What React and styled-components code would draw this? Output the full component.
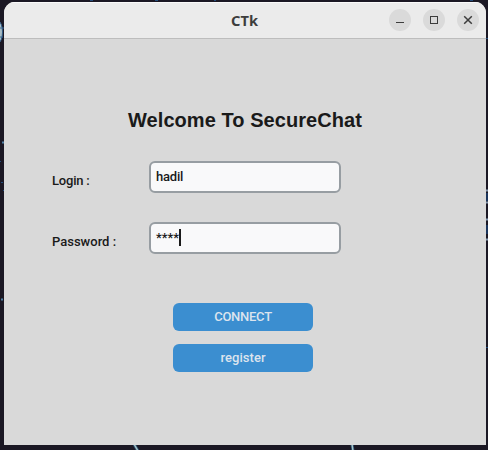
import React from "react";
import styled, { createGlobalStyle } from "styled-components";

const GlobalStyle = createGlobalStyle`
  * { box-sizing: border-box; }
  body { margin: 0; background: #1b1824; overflow: hidden; }
`;

const Desktop = styled.div`
  position: relative;
  width: 488px;
  height: 450px;
  padding: 2px 2px 5px 4px;
  background: #1b1824;
`;

const Wallpaper = styled.svg`
  position: absolute;
  inset: 0;
`;

const Window = styled.main`
  position: relative;
  display: flex;
  flex-direction: column;
  height: 443px;
  overflow: hidden;
  border-radius: 11px 11px 0 0;
  background: #d9d9d9;
`;

const TitleBar = styled.header`
  display: grid;
  grid-template-columns: 1fr auto 1fr;
  align-items: center;
  height: 37px;
  flex: none;
  padding: 0 7px 0 0;
  background: #ebebeb;
  border-bottom: 1px solid #bdbdbd;
  box-shadow: inset 0 1px #fafafa;
`;

const WindowTitle = styled.div`
  grid-column: 2;
  padding-left: 6px;
  font: 700 14.67px/20px "Noto Sans", sans-serif;
  color: #3d3d3d;
`;

const Controls = styled.div`
  display: flex;
  justify-self: end;
  gap: 12px;
`;

const ControlButton = styled.button`
  width: 22px;
  height: 22px;
  padding: 0;
  border: 0;
  border-radius: 50%;
  background: #dadada;
  svg { display: block; }
`;

const Form = styled.form`
  display: flex;
  flex-direction: column;
  font: 500 13px/16px Roboto, sans-serif;
  color: #1a1a1a;
`;

const Heading = styled.h1`
  margin: 69px 0 0;
  height: 24px;
  font: 700 20px/24px "Liberation Sans", Arial, sans-serif;
  letter-spacing: 0.06px;
  text-align: center;
`;

const Fields = styled.div`
  display: grid;
  grid-template-columns: 97px 192px;
  row-gap: 29px;
  margin: 29px 0 0 48px;
`;

const Label = styled.label`
  padding-top: 12px;
  letter-spacing: ${(p) => p.$tracking || "0"};
`;

const Entry = styled.div`
  display: flex;
  align-items: center;
  height: 32px;
  padding: 0 5px 1px;
  border: 2px solid #979da2;
  border-radius: 6px;
  background: #f9f9fa;
  letter-spacing: ${(p) => p.$tracking || "0"};
`;

const Caret = styled.span`
  width: 2px;
  height: 17px;
  background: #1a1a1a;
`;

const Actions = styled.div`
  display: flex;
  flex-direction: column;
  gap: 13px;
  margin: 49px 0 0 169px;
`;

const ActionButton = styled.button`
  width: 140px;
  height: 28px;
  padding: 0;
  border: 0;
  border-radius: 6px;
  background: #3b8ed0;
  color: #dce4ee;
  font: 500 13px/16px Roboto, sans-serif;
  letter-spacing: ${(p) => p.$tracking || "0"};
`;

const icons = {
  Minimize: <path d="M7 13.5H15" />,
  Maximize: <rect x="7.5" y="7.5" width="7" height="7" />,
  Close: <path d="M7.2 7.2L14.8 14.8M14.8 7.2L7.2 14.8" strokeWidth="1.5" />,
};

export default function App() {
  return (
    <>
      <GlobalStyle />
      <Desktop>
        <Wallpaper width="488" height="450" fill="none">
          <ellipse cx="-2" cy="32" rx="4.5" ry="11" fill="#a9bdc5" stroke="#315b87" />
          <path d="M0 28H4M0 37H3" stroke="#386693" />
          <path d="M2 142.5h2M1 299.5h2" stroke="#4f80a6" strokeWidth="2" />
          <path d="M0 161.5h1M1 182.5h2M3 190.5h1M90 .5h3M155 .5h3M214 .5h2M470 .5h3M486 38.5h2M486 347.5h2" stroke="#244d7c" />
          <path d="M486 190.5h2M486 202.5h2M486 219.5h2M486 239.5h2" stroke="#8295ac" strokeWidth="2" />
          <path d="M486 193h2v8h-2zM486 225h2v9h-2z" fill="#1b355c" />
          <path d="M134 444L138 451M352 444L353 451" stroke="#315678" strokeWidth="3" />
          <path d="M134 444L138 451M352 444L353 451" stroke="#a9c6c8" strokeWidth="1.4" />
        </Wallpaper>
        <Window>
          <TitleBar>
            <WindowTitle>CTk</WindowTitle>
            <Controls>
              {Object.entries(icons).map(([name, drawing]) => (
                <ControlButton key={name} aria-label={name}>
                  <svg width="22" height="22" fill="none" stroke="#3d3d3d">{drawing}</svg>
                </ControlButton>
              ))}
            </Controls>
          </TitleBar>
          <Form>
            <Heading>Welcome To SecureChat</Heading>
            <Fields>
              <Label $tracking="-0.2px">Login :</Label>
              <Entry $tracking="-0.2px">hadil</Entry>
              <Label>Password :</Label>
              <Entry>****<Caret /></Entry>
            </Fields>
            <Actions>
              <ActionButton type="button" $tracking="-0.25px">CONNECT</ActionButton>
              <ActionButton type="button" $tracking="0.05px">register</ActionButton>
            </Actions>
          </Form>
        </Window>
      </Desktop>
    </>
  );
}
